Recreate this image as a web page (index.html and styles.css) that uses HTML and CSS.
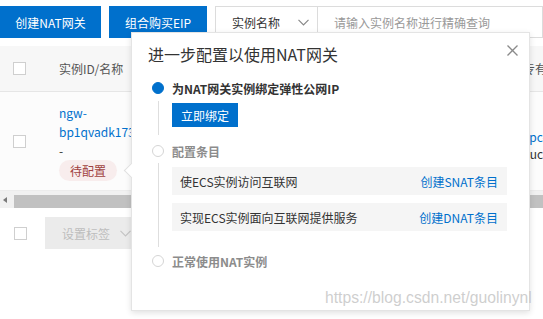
FILE: index.html
```html
<!DOCTYPE html>
<html lang="zh-CN">
<head>
<meta charset="utf-8">
<title>NAT网关</title>
<link rel="stylesheet" href="styles.css">
</head>
<body>
<div class="page">
  <div class="toolbar">
    <button class="btn primary w1">创建NAT网关</button>
    <button class="btn primary w2">组合购买EIP</button>
    <div class="search">
      <div class="select">实例名称
        <svg class="chev" width="11" height="7" viewBox="0 0 11 7"><path d="M0.5 0.8 L5.5 5.8 L10.5 0.8" fill="none" stroke="#888" stroke-width="1.2"/></svg>
      </div>
      <div class="input">请输入实例名称进行精确查询</div>
    </div>
  </div>

  <div class="table">
    <div class="thead">
      <div class="c-chk"><span class="checkbox"></span></div>
      <div class="c-id">实例ID/名称</div>
      <div class="c-last">专有网络</div>
    </div>
    <div class="trow">
      <div class="c-chk"><span class="checkbox"></span></div>
      <div class="c-id id-cell">
        <div class="link">ngw-</div>
        <div class="link">bp1qvadk173</div>
        <div class="dark">-</div>
        <span class="badge">待配置</span>
      </div>
      <div class="c-last vpc-cell">
        <div class="link">vpc-</div>
        <div class="dark">guc</div>
      </div>
    </div>
  </div>

  <div class="scrollbar"><span class="sb-arrow"></span><div class="thumb"></div></div>

  <div class="footer">
    <span class="checkbox"></span>
    <button class="btn disabled">设置标签
      <svg class="chev" width="11" height="7" viewBox="0 0 11 7"><path d="M0.5 0.8 L5.5 5.8 L10.5 0.8" fill="none" stroke="#c4c4c4" stroke-width="1.2"/></svg>
    </button>
  </div>

  <div class="popover">
    <svg class="close" width="11" height="11" viewBox="0 0 11 11"><path d="M0.5 0.5 L10.5 10.5 M10.5 0.5 L0.5 10.5" stroke="#8a8a8a" stroke-width="1.3"/></svg>
    <h2 class="pop-title">进一步配置以使用NAT网关</h2>
    <div class="steps">
      <div class="step-head">
        <span class="dot active"></span>
        <span class="step-title active">为NAT网关实例绑定弹性公网IP</span>
      </div>
      <div class="step-body b1">
        <button class="btn primary small">立即绑定</button>
      </div>
      <div class="step-head">
        <span class="dot"></span>
        <span class="step-title">配置条目</span>
      </div>
      <div class="step-body b2">
        <div class="entry"><span>使ECS实例访问互联网</span><a class="entry-link">创建SNAT条目</a></div>
        <div class="entry"><span>实现ECS实例面向互联网提供服务</span><a class="entry-link">创建DNAT条目</a></div>
      </div>
      <div class="step-head">
        <span class="dot"></span>
        <span class="step-title">正常使用NAT实例</span>
      </div>
    </div>
  </div>

  <div class="watermark">https://blog.csdn.net/guolinynl</div>
</div>
</body>
</html>
```

FILE: styles.css
```css
html, body {
  margin: 0;
  padding: 0;
  background: #fff;
}
body {
  font-family: "Noto Sans CJK SC", "Noto Sans", sans-serif;
  font-size: 12px;
  color: #333;
}
.page {
  position: relative;
  width: 543px;
  height: 319px;
  overflow: hidden;
}
.btn {
  font-family: inherit;
  font-size: 12px;
  border: none;
  padding: 0;
  margin: 0;
  cursor: pointer;
}
.btn.primary {
  background: #0070cc;
  color: #fff;
}
.toolbar {
  display: flex;
  gap: 8px;
  padding-top: 6px;
  height: 32px;
  margin-bottom: 8px;
}
.w1 { width: 101px; height: 32px; }
.w2 { width: 98px; height: 32px; }
.search {
  display: flex;
  flex: 1;
  height: 32px;
}
.select {
  box-sizing: border-box;
  width: 103px;
  height: 32px;
  border: 1px solid #dcdcdc;
  display: flex;
  align-items: center;
  justify-content: space-between;
  padding: 0 8px 0 16px;
  color: #333;
}
.input {
  box-sizing: border-box;
  flex: 1;
  height: 32px;
  border: 1px solid #dcdcdc;
  border-left: none;
  display: flex;
  align-items: center;
  padding-left: 16px;
  color: #999;
  white-space: nowrap;
}
.thead, .trow {
  display: grid;
  grid-template-columns: 46px 477px 1fr;
  white-space: nowrap;
}
.thead {
  height: 46px;
  background: #f7f7f7;
  border-bottom: 1px solid #e6e6e6;
  box-sizing: border-box;
  align-items: center;
  color: #555;
}
.c-chk {
  display: flex;
  align-items: center;
  padding-left: 13px;
}
.c-id { padding-left: 13px; }
.checkbox {
  box-sizing: border-box;
  display: inline-block;
  width: 13px;
  height: 13px;
  border: 1px solid #cfcfcf;
  background: #fff;
}
.trow {
  height: 99px;
  background: #fcfcfc;
  border-bottom: 1px solid #ececec;
  box-sizing: border-box;
}
.id-cell {
  padding-top: 11px;
  line-height: 19px;
}
.link { color: #0070cc; }
.dark { color: #333; }
.badge {
  display: inline-block;
  height: 21px;
  line-height: 21px;
  padding: 0 11px;
  border-radius: 11px;
  background: #f8eded;
  color: #a0423f;
}
.vpc-cell {
  padding-top: 36px;
  line-height: 17px;
}
.scrollbar {
  height: 17px;
  background: #f1f1f1;
  display: flex;
  align-items: center;
}
.sb-arrow {
  width: 0;
  height: 0;
  margin-left: 3px;
  border-top: 3px solid transparent;
  border-bottom: 3px solid transparent;
  border-right: 4px solid #7a7a7a;
}
.thumb {
  margin-left: 7px;
  flex: 1;
  height: 13px;
  margin-top: 3px;
  background: #c1c1c1;
}
.footer {
  display: flex;
  align-items: center;
  gap: 18px;
  padding-left: 14px;
  margin-top: 9px;
  height: 32px;
}
.btn.disabled {
  width: 100px;
  height: 32px;
  background: #ebebeb;
  color: #bdbdbd;
  display: flex;
  align-items: center;
  gap: 10px;
  padding-left: 17px;
  box-sizing: border-box;
}
.popover {
  position: absolute;
  left: 131px;
  top: 32px;
  width: 399px;
  height: 279px;
  box-sizing: border-box;
  background: #fff;
  border: 1px solid #e4e4e4;
  box-shadow: 0 2px 6px rgba(0, 0, 0, 0.12);
  padding: 10px 22px 0 16px;
}
.popover::before {
  content: "";
  position: absolute;
  left: -6px;
  top: 132px;
  width: 10px;
  height: 10px;
  background: #fff;
  border-left: 1px solid #e0e0e0;
  border-bottom: 1px solid #e0e0e0;
  transform: rotate(45deg);
}
.close {
  position: absolute;
  right: 11px;
  top: 12px;
}
.pop-title {
  margin: 0;
  font-size: 16px;
  font-weight: normal;
  line-height: 22px;
  color: #333;
}
.steps {
  margin-top: 11px;
  padding-left: 4px;
}
.step-head {
  display: flex;
  align-items: center;
  gap: 8px;
  height: 24px;
}
.dot {
  box-sizing: border-box;
  width: 12px;
  height: 12px;
  border-radius: 50%;
  border: 1px solid #d5d5d5;
  background: #fff;
}
.dot.active {
  border-color: #0070cc;
  background: #0070cc;
}
.step-title {
  font-weight: bold;
  color: #8c8c8c;
}
.step-title.active { color: #333; }
.step-body {
  margin-left: 6px;
  border-left: 1px solid #dedede;
  padding-left: 13px;
}
.b1 {
  margin-top: 1px;
  padding-top: 2px;
  padding-bottom: 8px;
  margin-bottom: 4px;
}
.btn.small {
  width: 66px;
  height: 24px;
  display: block;
}
.b2 {
  padding-top: 4px;
  padding-bottom: 16px;
  margin-bottom: 2px;
  display: flex;
  flex-direction: column;
  gap: 8px;
}
.entry {
  height: 28px;
  display: flex;
  align-items: center;
  justify-content: space-between;
  padding: 0 9px 0 8px;
  background: #f5f5f5;
  color: #333;
}
.entry-link { color: #0070cc; }
.watermark {
  position: absolute;
  left: 325px;
  top: 289px;
  font-family: "Liberation Sans", sans-serif;
  font-size: 15.7px;
  line-height: 18px;
  color: rgba(190, 190, 190, 0.75);
  white-space: nowrap;
}
```
